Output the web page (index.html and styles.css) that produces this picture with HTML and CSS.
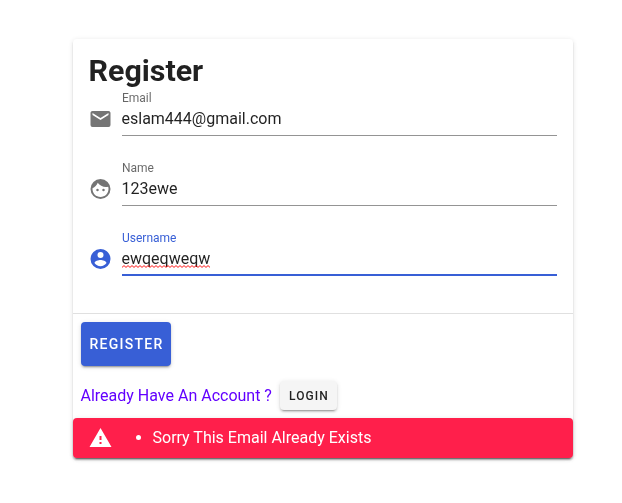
FILE: index.html
```html
<!DOCTYPE html>
<html lang="en">
<head>
<meta charset="utf-8">
<title>Register</title>
<link rel="stylesheet" href="styles.css">
</head>
<body>
<main class="card">
  <section class="card-body">
    <h1 class="title">Register</h1>
    <div class="field">
      <svg class="icon" viewBox="0 0 24 24"><path d="M20,8L12,13L4,8V6L12,11L20,6M20,4H4C2.89,4 2,4.89 2,6V18A2,2 0 0,0 4,20H20A2,2 0 0,0 22,18V6C22,4.89 21.1,4 20,4Z"/></svg>
      <div class="control">
        <div class="label">Email</div>
        <div class="value">eslam444@gmail.com</div>
      </div>
    </div>
    <div class="field">
      <svg class="icon" viewBox="0 0 24 24"><path d="M9,11.75A1.25,1.25 0 0,0 7.75,13A1.25,1.25 0 0,0 9,14.25A1.25,1.25 0 0,0 10.25,13A1.25,1.25 0 0,0 9,11.75M15,11.75A1.25,1.25 0 0,0 13.75,13A1.25,1.25 0 0,0 15,14.25A1.25,1.25 0 0,0 16.25,13A1.25,1.25 0 0,0 15,11.75M12,2A10,10 0 0,0 2,12A10,10 0 0,0 12,22A10,10 0 0,0 22,12A10,10 0 0,0 12,2M12,20C7.59,20 4,16.41 4,12C4,11.71 4,11.42 4.05,11.14C6.41,10.09 8.28,8.16 9.26,5.77C11.07,8.33 14.05,10 17.42,10C18.2,10 18.95,9.91 19.67,9.74C19.88,10.45 20,11.21 20,12C20,16.41 16.41,20 12,20Z"/></svg>
      <div class="control">
        <div class="label">Name</div>
        <div class="value">123ewe</div>
      </div>
    </div>
    <div class="field field-active">
      <svg class="icon" viewBox="0 0 24 24"><path d="M12,19.2C9.5,19.2 7.29,17.92 6,16C6.03,14 10,12.9 12,12.9C14,12.9 17.97,14 18,16C16.71,17.92 14.5,19.2 12,19.2M12,5A3,3 0 0,1 15,8A3,3 0 0,1 12,11A3,3 0 0,1 9,8A3,3 0 0,1 12,5M12,2A10,10 0 0,0 2,12A10,10 0 0,0 12,22A10,10 0 0,0 22,12C22,6.47 17.5,2 12,2Z"/></svg>
      <div class="control">
        <div class="label">Username</div>
        <div class="value"><span class="misspelled">ewqeqweqw<svg class="squiggle"><defs><pattern id="wave" width="4" height="3" patternUnits="userSpaceOnUse"><path d="M-1,1.5L0,2.4L2,0.6L4,2.4L5,1.5"/></pattern></defs><rect width="100%" height="3" fill="url(#wave)" stroke="none"/></svg></span></div>
      </div>
    </div>
  </section>
  <section class="actions">
    <button class="btn btn-primary">Register</button>
    <div class="account">
      <span>Already Have An Account ?</span>
      <button class="btn btn-small">Login</button>
    </div>
  </section>
  <div class="alert">
    <svg class="icon" viewBox="0 0 24 24"><path d="M13,14H11V10H13M13,18H11V16H13M1,21H23L12,2L1,21Z"/></svg>
    <ul><li>Sorry This Email Already Exists</li></ul>
  </div>
</main>
</body>
</html>
```

FILE: styles.css
```css
* {
  box-sizing: border-box;
}

html {
  background: #fff;
}

body {
  min-height: 100vh;
  margin: 0;
  padding: 39px 0 0 72.5px;
  color: rgba(0, 0, 0, 0.87);
  font: 16px/24px Roboto, sans-serif;
  will-change: transform;
}

.card {
  width: 500px;
  border-radius: 4px;
  background: #fff;
  box-shadow: 0 3px 1px -2px rgba(0, 0, 0, 0.2), 0 2px 2px 0 rgba(0, 0, 0, 0.14), 0 1px 5px 0 rgba(0, 0, 0, 0.12);
}

.card-body {
  height: 275px;
  padding: 16px 16px 0;
  border-bottom: 1px solid rgba(0, 0, 0, 0.12);
}

.title {
  margin: 0;
  font-size: 30.4px;
  line-height: 32px;
  font-weight: 700;
}

.field {
  display: flex;
  gap: 9px;
  height: 70px;
  padding-top: 4px;
}

.icon {
  flex: none;
  width: 24px;
  height: 24px;
  fill: currentColor;
  transform: translateX(-0.5px);
}

.field .icon {
  margin-top: 16px;
  color: #757575;
}

.control {
  flex: 1;
  height: 45px;
  border-bottom: 1px solid #949494;
}

.label {
  padding-left: 0.5px;
  color: rgba(0, 0, 0, 0.6);
  font-size: 12px;
  line-height: 14px;
}

.value {
  padding-top: 2px;
  line-height: 24px;
}

.field-active .icon,
.field-active .label {
  color: #385fd6;
}

.field-active .control {
  border-bottom: 2px solid #385fd6;
}

.misspelled {
  position: relative;
}

.squiggle {
  position: absolute;
  left: 0;
  bottom: 0;
  width: 100%;
  height: 3px;
  fill: none;
  stroke: #f00;
  stroke-width: 0.9;
}

.actions {
  padding: 8px;
}

.btn {
  display: flex;
  align-items: center;
  justify-content: center;
  border: 0;
  border-radius: 4px;
  font-family: inherit;
  font-weight: 500;
  letter-spacing: 0.0892857143em;
  text-transform: uppercase;
  box-shadow: 0 3px 1px -2px rgba(0, 0, 0, 0.2), 0 2px 2px 0 rgba(0, 0, 0, 0.14), 0 1px 5px 0 rgba(0, 0, 0, 0.12);
}

.btn-primary {
  width: 90px;
  height: 44px;
  padding: 0 0 0 2px;
  background: #385fd6;
  color: #fff;
  font-size: 14px;
}

.btn-small {
  width: 57px;
  height: 29px;
  padding: 0 0 0 1px;
  background: #f5f5f5;
  color: rgba(0, 0, 0, 0.87);
  font-size: 12px;
}

.account {
  display: flex;
  align-items: center;
  gap: 8px;
  margin-top: 15px;
  color: #6200ff;
}

.alert {
  display: flex;
  align-items: center;
  height: 40px;
  padding: 0 16px;
  border-radius: 4px;
  background: #ff1f4b;
  color: #fff;
  box-shadow: 0 3px 1px -2px rgba(0, 0, 0, 0.2), 0 2px 2px 0 rgba(0, 0, 0, 0.14), 0 1px 5px 0 rgba(0, 0, 0, 0.12);
}

.alert ul {
  margin: 0 0 0 16px;
  padding-left: 24px;
}
```
